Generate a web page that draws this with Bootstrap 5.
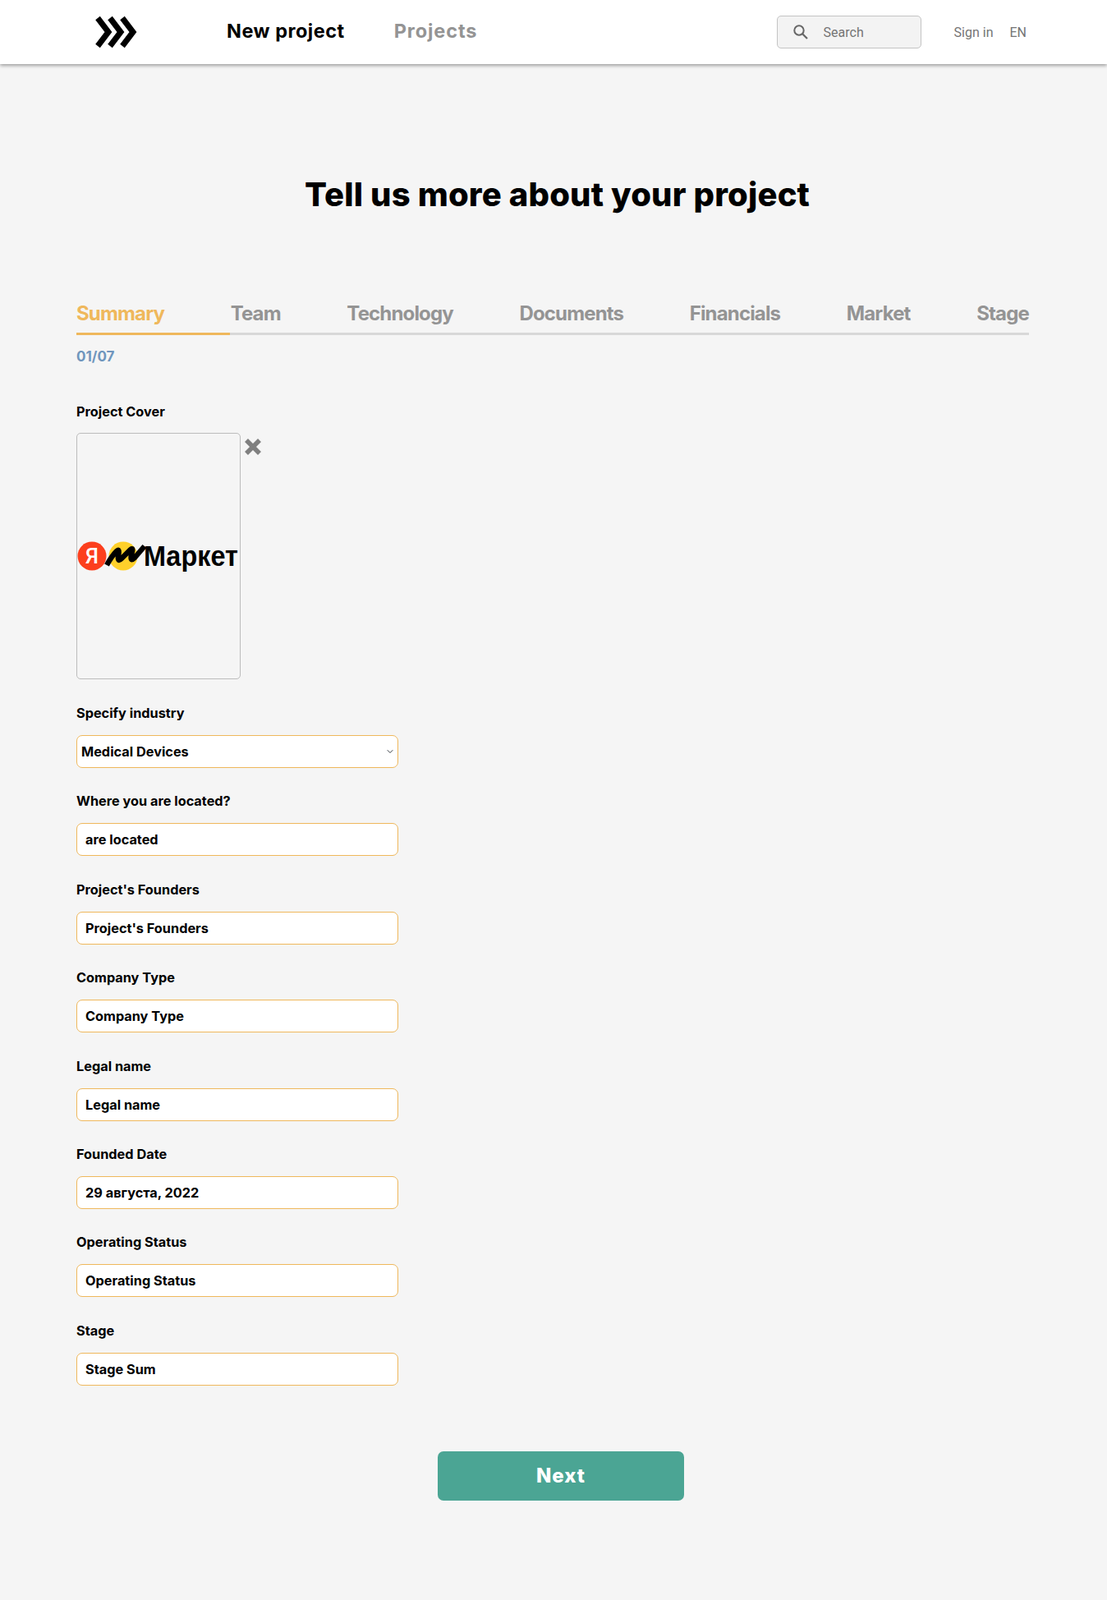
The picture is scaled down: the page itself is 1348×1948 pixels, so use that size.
<!DOCTYPE html>
<html lang="en">
<head>
<meta charset="utf-8">
<title>New project</title>
<link href="https://cdn.jsdelivr.net/npm/bootstrap@5.3.0/dist/css/bootstrap.min.css" rel="stylesheet">
<style>
body{background:#f5f5f5;font-family:Inter,"Liberation Sans",sans-serif;color:#000;min-height:1948px}
.topbar{height:78px;background:#fff;box-shadow:0 2px 4px rgba(0,0,0,.35);padding:0 0 0 116px}
.logo-slot{width:160px}
.nav-main{font-size:23.5px;font-weight:700;text-decoration:none;letter-spacing:.5px;margin-top:-3px}
.nav-on{color:#000;margin-right:60px}
.nav-off{color:#949494;letter-spacing:.9px}
.searchbox{width:176px;height:40px;background:#f3f3f3;border:1px solid #c4c4c4;border-radius:5px;padding-left:18px;gap:18px;margin-right:40px}
.searchbox input{border:0;background:transparent;outline:0;font:16px Roboto,sans-serif;color:#757575;width:100px;padding:0}
.searchbox input::placeholder{color:#757575;opacity:1}
.nav-small{font:16px Roboto,sans-serif;color:#757575;text-decoration:none}
.nav-lang{margin:0 98px 0 20px}
.content{padding:0 95px 0 93px}
.page-title{font-size:40px;font-weight:800;text-align:center;margin:134px 0 0 0;line-height:50px;padding-left:11px;letter-spacing:.16px}
.stepper{margin-top:103px;border-bottom:3px solid #d8d8d8;height:43px}
.step-item{font-size:24px;font-weight:700;color:#949494;padding-right:80px;height:43px;margin-bottom:-3px;letter-spacing:-.85px;text-decoration:none;display:block;line-height:34px}
.step-item:last-child{padding-right:0}
.step-active{color:#efb85c;border-bottom:3px solid #efb85c}
.step-count{color:#7096bd;font-size:17px;font-weight:700;margin-top:16px;line-height:20px}
.field-label{display:block;font-size:16.3px;font-weight:700;line-height:20px;margin-bottom:17px}
.cover-label{margin-top:47px;margin-bottom:16px}
.cover-box{width:200px;height:300px;border:1px solid #bcbcbc;border-radius:5px}
.cover-x{margin-left:4px;margin-top:6px}
.field-wrap{width:392px;margin-bottom:30.4px}
.cover-row{margin-bottom:31px}
.form-control.field-input,.form-select.field-input{height:40px;border:1px solid #efb85c;border-radius:7px;background-color:#fff;font-size:16.3px;font-weight:700;color:#000;padding:0 10px}
.form-select.field-input{padding-left:5px;background-size:10px 8px;background-position:right 4px center}
.next-btn{width:300px;height:60px;background:#4ba594;border:0;border-radius:7px;color:#fff;font-size:24px;font-weight:800;letter-spacing:1px;margin:80px 0 0 440px}
.next-btn:hover{background:#4ba594;color:#fff}
</style>
</head>
<body>
<nav class="navbar topbar d-flex align-items-center flex-nowrap">
  <div class="d-flex align-items-center flex-grow-1">
    <a class="logo-slot d-block" href="#" aria-label="Home">
      <svg width="52" height="40" viewBox="0 0 52 40"><g fill="none" stroke="#000" stroke-width="7" stroke-linejoin="miter"><path d="M3 3l13 17L3 37"/><path d="M18 3l13 17-13 17"/><path d="M33 3l13 17-13 17"/></g></svg>
    </a>
    <a class="nav-main nav-on" href="#">New project</a>
    <a class="nav-main nav-off" href="#">Projects</a>
  </div>
  <div class="d-flex align-items-center searchbox">
    <svg width="20" height="20" viewBox="0 0 20 20"><circle cx="8" cy="8" r="5.7" fill="none" stroke="#666" stroke-width="2"/><path d="M12.2 12.2l5.8 5.8" stroke="#666" stroke-width="2.2"/></svg>
    <input type="text" placeholder="Search" aria-label="Search">
  </div>
  <a class="nav-small" href="#">Sign in</a>
  <a class="nav-small nav-lang" href="#">EN</a>
</nav>

<main class="content">
  <h1 class="page-title">Tell us more about your project</h1>

  <div class="stepper d-flex justify-content-between">
    <a class="step-item step-active" href="#">Summary</a>
    <a class="step-item" href="#">Team</a>
    <a class="step-item" href="#">Technology</a>
    <a class="step-item" href="#">Documents</a>
    <a class="step-item" href="#">Financials</a>
    <a class="step-item" href="#">Market</a>
    <a class="step-item" href="#">Stage</a>
  </div>
  <div class="step-count">01/07</div>

  <form>
    <label class="field-label cover-label">Project Cover</label>
    <div class="d-flex align-items-start cover-row">
      <div class="cover-box d-flex align-items-center justify-content-center">
        <svg width="198" height="56" viewBox="0 0 198 56">
          <circle cx="18" cy="28" r="17.5" fill="#fc3f1d"/>
          <text x="18" y="37" text-anchor="middle" font-family="Roboto,sans-serif" font-size="26" font-weight="500" fill="#fff">Я</text>
          <circle cx="56" cy="28" r="17.5" fill="#ffd02b"/>
          <path d="M36 39 Q42 28 48 22 Q52 18 50 28 Q49 36 54 31 L65 20 Q69 17 66 26 Q64 36 70 30 L82 16" fill="none" stroke="#000" stroke-width="6.5" stroke-linejoin="round"/>
          <text transform="translate(81 39.5) scale(.9 1)" font-family="Liberation Sans,sans-serif" font-size="36" font-weight="700" fill="#000">Маркет</text>
        </svg>
      </div>
      <svg class="cover-x" width="22" height="22" viewBox="0 0 22 22"><path d="M3 3l16 16M19 3L3 19" stroke="#7f7f7f" stroke-width="5.6"/></svg>
    </div>

    <div class="field-wrap">
      <label class="field-label">Specify industry</label>
      <select class="form-select field-input"><option>Medical Devices</option></select>
    </div>
    <div class="field-wrap">
      <label class="field-label">Where you are located?</label>
      <input class="form-control field-input" value="are located">
    </div>
    <div class="field-wrap">
      <label class="field-label">Project's Founders</label>
      <input class="form-control field-input" value="Project's Founders">
    </div>
    <div class="field-wrap">
      <label class="field-label">Company Type</label>
      <input class="form-control field-input" value="Company Type">
    </div>
    <div class="field-wrap">
      <label class="field-label">Legal name</label>
      <input class="form-control field-input" value="Legal name">
    </div>
    <div class="field-wrap">
      <label class="field-label">Founded Date</label>
      <input class="form-control field-input" value="29 августа, 2022">
    </div>
    <div class="field-wrap">
      <label class="field-label">Operating Status</label>
      <input class="form-control field-input" value="Operating Status">
    </div>
    <div class="field-wrap">
      <label class="field-label">Stage</label>
      <input class="form-control field-input" value="Stage Sum">
    </div>
    <button type="button" class="btn next-btn d-block">Next</button>
  </form>
</main>
<script src="https://cdn.jsdelivr.net/npm/bootstrap@5.3.0/dist/js/bootstrap.bundle.min.js"></script>
</body>
</html>
